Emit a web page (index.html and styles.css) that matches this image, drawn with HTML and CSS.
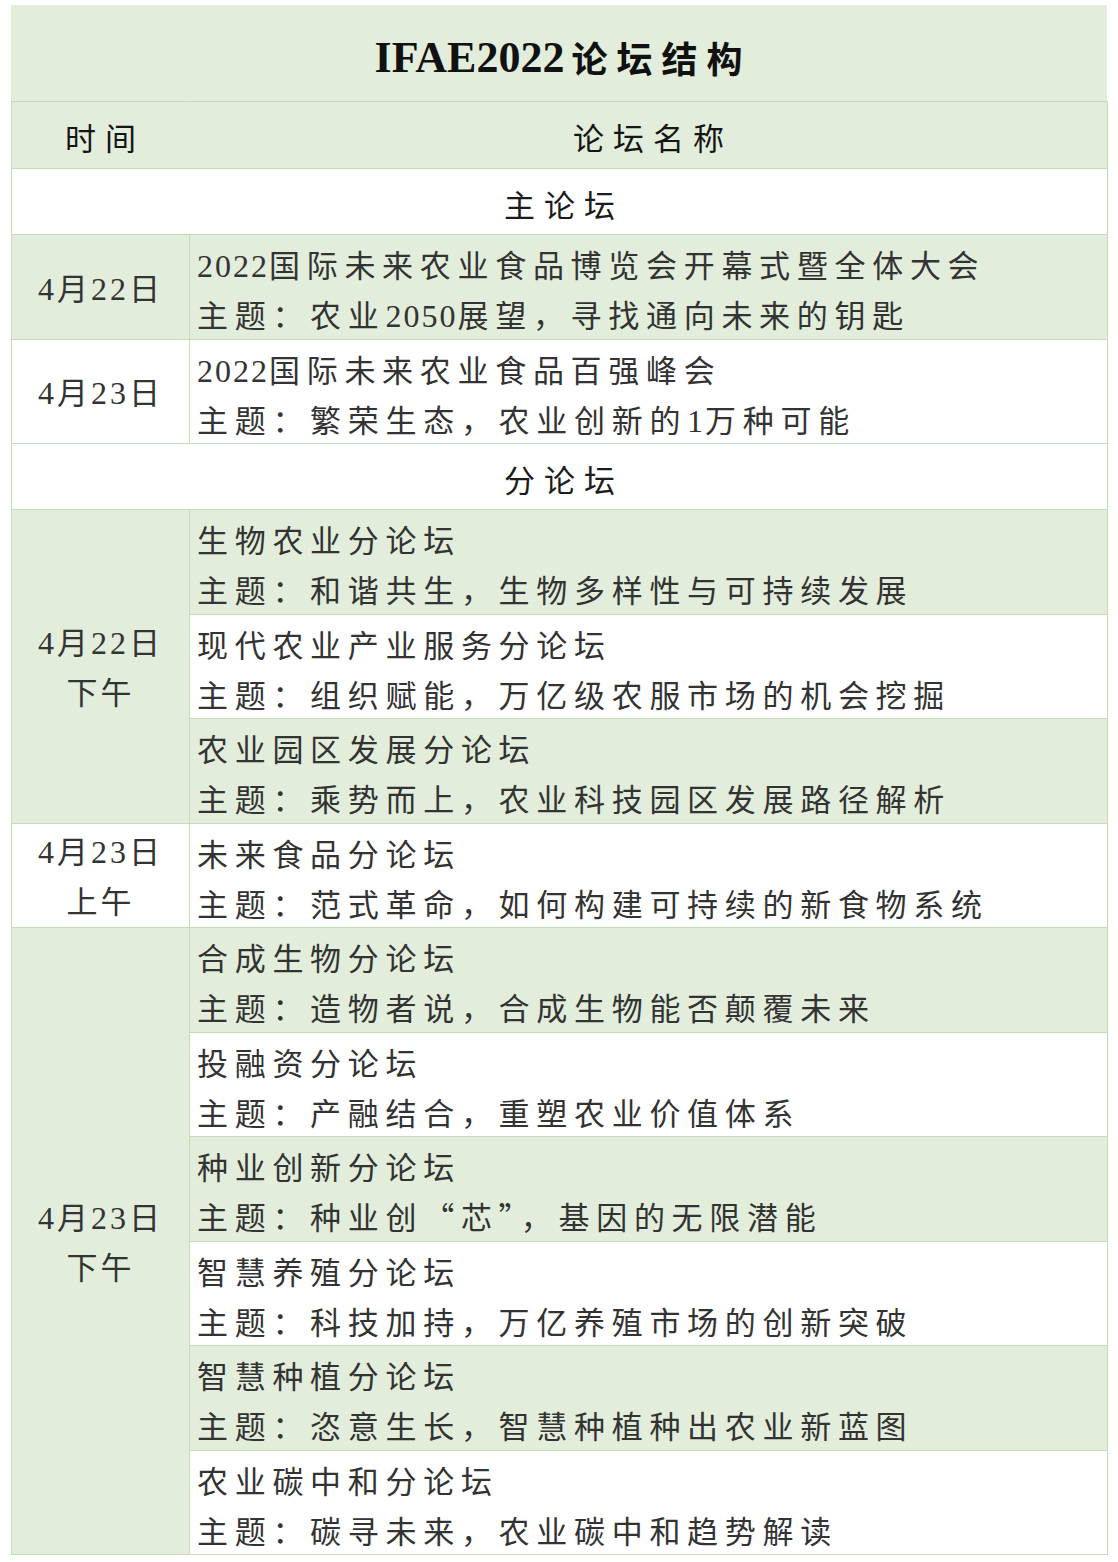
FILE: index.html
```html
<!DOCTYPE html>
<html lang="zh-CN">
<head>
<meta charset="utf-8">
<title>IFAE2022论坛结构</title>
<link rel="stylesheet" href="styles.css">
</head>
<body>
<div class="sheet">
  <div class="title"><span class="t-latin">IFAE2022</span><span class="t-cjk">论坛结构</span></div>
  <table class="forum">
    <colgroup><col class="c-time"><col class="c-name"></colgroup>
    <tr class="head">
      <th class="h-time"><div class="h-in">时间</div></th>
      <th class="h-name"><div class="h-in">论坛名称</div></th>
    </tr>
    <tr class="section">
      <td colspan="2"><div class="s-in">主论坛</div></td>
    </tr>
    <tr class="green">
      <td class="date"><span class="num">4</span>月<span class="num">22</span>日</td>
      <td class="name"><div class="entry"><div class="line"><span class="num">2022</span>国际未来农业食品博览会开幕式暨全体大会</div><div class="line">主题：农业<span class="num">2050</span>展望，寻找通向未来的钥匙</div></div></td>
    </tr>
    <tr class="white">
      <td class="date"><span class="num">4</span>月<span class="num">23</span>日</td>
      <td class="name"><div class="entry"><div class="line"><span class="num">2022</span>国际未来农业食品百强峰会</div><div class="line">主题：繁荣生态，农业创新的<span class="num">1</span>万种可能</div></div></td>
    </tr>
    <tr class="section">
      <td colspan="2"><div class="s-in">分论坛</div></td>
    </tr>
    <tr>
      <td class="date green-cell" rowspan="3"><span class="num">4</span>月<span class="num">22</span>日<br>下午</td>
      <td class="name green-cell"><div class="entry"><div class="line">生物农业分论坛</div><div class="line">主题：和谐共生，生物多样性与可持续发展</div></div></td>
    </tr>
    <tr>
      <td class="name white-cell"><div class="entry"><div class="line">现代农业产业服务分论坛</div><div class="line">主题：组织赋能，万亿级农服市场的机会挖掘</div></div></td>
    </tr>
    <tr>
      <td class="name green-cell"><div class="entry"><div class="line">农业园区发展分论坛</div><div class="line">主题：乘势而上，农业科技园区发展路径解析</div></div></td>
    </tr>
    <tr class="white">
      <td class="date"><span class="num">4</span>月<span class="num">23</span>日<br>上午</td>
      <td class="name"><div class="entry"><div class="line">未来食品分论坛</div><div class="line">主题：范式革命，如何构建可持续的新食物系统</div></div></td>
    </tr>
    <tr>
      <td class="date green-cell" rowspan="6"><span class="num">4</span>月<span class="num">23</span>日<br>下午</td>
      <td class="name green-cell"><div class="entry"><div class="line">合成生物分论坛</div><div class="line">主题：造物者说，合成生物能否颠覆未来</div></div></td>
    </tr>
    <tr>
      <td class="name white-cell"><div class="entry"><div class="line">投融资分论坛</div><div class="line">主题：产融结合，重塑农业价值体系</div></div></td>
    </tr>
    <tr>
      <td class="name green-cell"><div class="entry"><div class="line">种业创新分论坛</div><div class="line">主题：种业创<span class="fw">“</span>芯<span class="fw">”</span>，基因的无限潜能</div></div></td>
    </tr>
    <tr>
      <td class="name white-cell"><div class="entry"><div class="line">智慧养殖分论坛</div><div class="line">主题：科技加持，万亿养殖市场的创新突破</div></div></td>
    </tr>
    <tr>
      <td class="name green-cell"><div class="entry"><div class="line">智慧种植分论坛</div><div class="line">主题：恣意生长，智慧种植种出农业新蓝图</div></div></td>
    </tr>
    <tr>
      <td class="name white-cell"><div class="entry"><div class="line">农业碳中和分论坛</div><div class="line">主题：碳寻未来，农业碳中和趋势解读</div></div></td>
    </tr>
  </table>
</div>
</body>
</html>
```

FILE: styles.css
```css
html, body {
  margin: 0;
  padding: 0;
  background: #ffffff;
}

body {
  font-family: "Noto Sans CJK SC", "Liberation Serif", sans-serif;
  color: #333333;
}

.sheet {
  width: 1096px;
  margin: 5px 0 0 11px;
}

.title {
  height: 96px;
  box-sizing: border-box;
  padding: 8px 0 0 8px;
  background: #e2eddb;
  display: flex;
  align-items: center;
  justify-content: center;
  color: #111111;
}

.t-latin {
  font-family: "Liberation Serif", serif;
  font-weight: 700;
  font-size: 44px;
  margin-right: 7px;
}

.t-cjk {
  font-family: "Noto Sans CJK SC", sans-serif;
  font-weight: 700;
  font-size: 36px;
  letter-spacing: 9px;
}

.forum {
  width: 1096px;
  border-collapse: collapse;
  table-layout: fixed;
}

.c-time { width: 178px; }
.c-name { width: 918px; }

.forum th,
.forum td {
  border: 1px solid #c6dbb7;
  padding: 0;
}

.head th {
  background: #e2eddb;
  font-weight: 400;
  color: #151515;
}

.head .h-time { border-right-color: #e2eddb; }
.head .h-name { border-left-color: #e2eddb; }

.h-in {
  height: 66px;
  padding: 3px 0 0 9px;
  box-sizing: border-box;
  display: flex;
  align-items: center;
  justify-content: center;
  font-size: 31px;
  letter-spacing: 9px;
}

.section td {
  background: #ffffff;
}

.s-in {
  height: 65px;
  padding: 3px 0 0 9px;
  box-sizing: border-box;
  display: flex;
  align-items: center;
  justify-content: center;
  font-size: 31px;
  letter-spacing: 9px;
  color: #1c1c1c;
}

.green td,
.green-cell { background: #e2eddb; }

.white td,
.white-cell { background: #ffffff; }

.date {
  text-align: center;
  vertical-align: middle;
  font-size: 31px;
  line-height: 50px;
  letter-spacing: 3px;
  padding: 2px 0 0 3px;
}

.name {
  vertical-align: top;
}

.entry {
  height: 103.5px;
  box-sizing: border-box;
  padding: 4px 0 0 7px;
}

.line {
  font-size: 31px;
  line-height: 50px;
  letter-spacing: 6.7px;
  white-space: nowrap;
}

.num {
  font-family: "Liberation Serif", serif;
  font-size: 32px;
  line-height: 1;
  letter-spacing: 2px;
}

.date .num {
  letter-spacing: 3px;
}

.fw {
  font-feature-settings: "fwid" 1;
}
```
